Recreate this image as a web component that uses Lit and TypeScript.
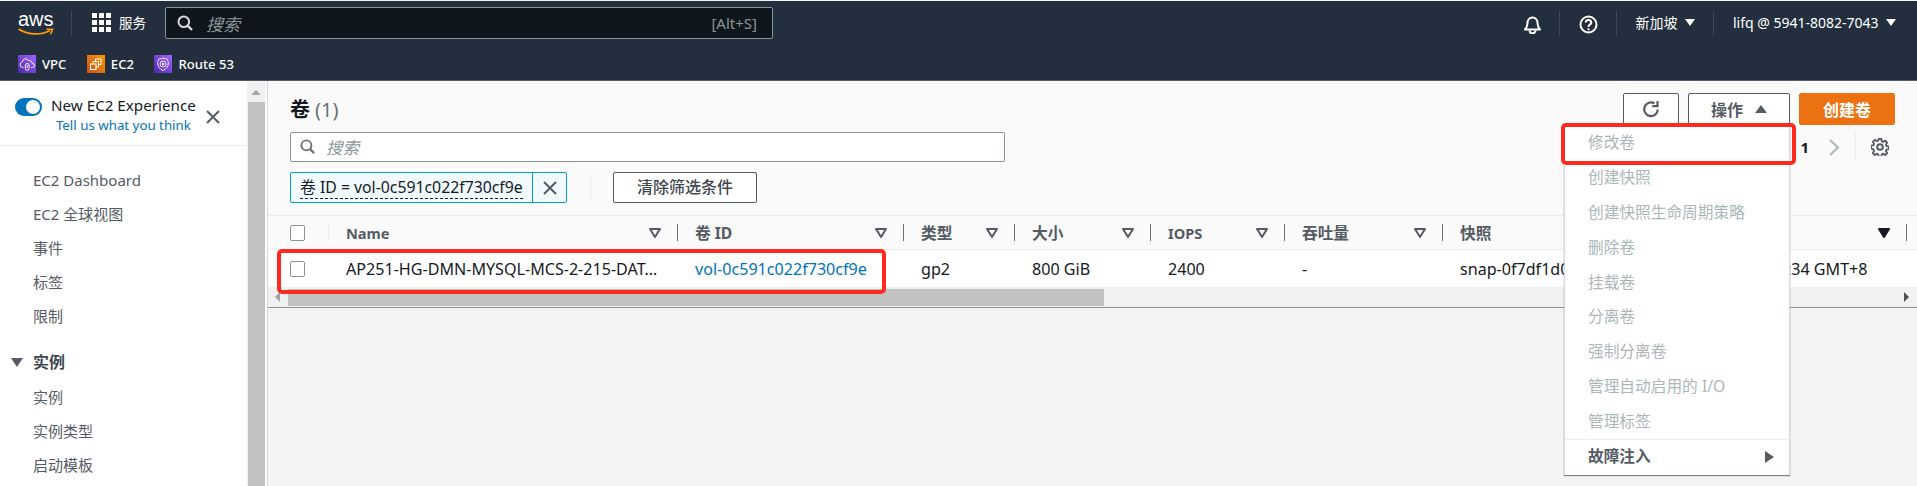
import { LitElement, html, css, svg } from "lit";
import { customElement } from "lit/decorators.js";

const SEARCH = svg`<circle cx="6.8" cy="6.8" r="5.3" fill="none" stroke="currentColor" stroke-width="2"/><path d="M10.6 10.6 15 15" stroke="currentColor" stroke-width="2.4" fill="none"/>`;
const X = svg`<path d="M2 2 14 14M14 2 2 14" stroke="currentColor" stroke-width="2" fill="none"/>`;

@customElement("app-root")
export class AppRoot extends LitElement {
  static styles = css`
    :host { display: block; position: relative; height: 100vh; overflow: hidden; background: #f2f3f3; font-family: "Noto Sans", "Noto Sans CJK SC", sans-serif; font-size: 16px; color: #16191f; }
    svg { display: block; flex: none; }
    .top { height: 80px; margin-top: 1px; background: #232f3e; color: #fff; border-bottom: 1px solid #545b64; box-sizing: border-box; }
    .nav { height: 48px; display: flex; align-items: flex-start; }
    .logo { width: 53px; margin-left: 18px; height: 38px; display: flex; flex-direction: column; align-items: flex-start; padding-top: 10px; box-sizing: border-box; }
    .logo b { font: 400 20px/16px "Liberation Sans", sans-serif; display: block; margin-bottom: 1px; }
    .nsep { width: 1px; height: 25px; background: #414750; margin-top: 10px; flex: none; }
    .svc { display: flex; align-items: center; gap: 8px; margin-left: 20px; height: 42px; font-size: 13.5px; width: 73px; }
    .grid { display: grid; grid-template-columns: repeat(3, 5px); gap: 2px; }
    .grid i { width: 5px; height: 5px; background: #fff; }
    .sbox { width: 608px; height: 32px; margin-top: 6px; box-sizing: border-box; background: #10161e; border: 1px solid #879596; border-radius: 2px; display: flex; align-items: center; padding: 0 15px 0 11px; color: #d5dbdb; gap: 12px; flex: none; }
    .sbox em { color: #879596; font-size: 17px; flex: 1; }
    .sbox span { color: #879596; font-size: 15px; }
    .right { margin-left: auto; display: flex; align-items: flex-start; font-size: 14px; }
    .ni { display: flex; align-items: center; justify-content: center; height: 42px; }
    .ni.ic { height: 46px; }
    .tri { width: 0; height: 0; border-left: 5px solid transparent; border-right: 5px solid transparent; border-top: 7px solid #fff; flex: none; }
    .fav { height: 30px; display: flex; align-items: center; padding-left: 18px; font-size: 13.1px; font-weight: 500; }
    .fi { width: 18px; height: 18px; margin-right: 6px; flex: none; }
    .fav span { margin-right: 20.500px; }
    .body { display: flex; height: 405px; }
    .side { width: 247px; flex: none; background: #fff; color: #545b64; position: relative; box-sizing: border-box; }
    .exp { height: 65px; border-bottom: 1px solid #eaeded; display: flex; padding: 0 0 0 15px; box-sizing: border-box; position: relative; }
    .tog { width: 27px; height: 18px; margin-top: 17px; background: #0073bb; border-radius: 9px; position: relative; flex: none; }
    .tog::after { content: ""; position: absolute; right: 2px; top: 2px; width: 14px; height: 14px; background: #fff; border-radius: 50%; }
    .et { margin: 14px 0 0 9px; font-size: 15.2px; line-height: 20px; color: #16191f; text-align: center; white-space: nowrap; }
    .et a { display: block; color: #0073bb; font-size: 13.300px; }
    .close { position: absolute; left: 205px; top: 28px; color: #545b64; }
    .nv { padding-top: 17px; }
    .nv div { height: 34px; line-height: 34px; padding-left: 33px; font-size: 15px; white-space: nowrap; }
    .nv .h { margin-top: 12px; margin-bottom: 1px; padding-left: 11px; display: flex; align-items: center; gap: 10px; font-weight: 700; font-size: 16px; color: #414750; }
    .nv .h .tri { border-left-width: 6px; border-right-width: 6px; border-top: 9px solid #545b64; }
    .vbar { width: 18px; flex: none; background: #f1f1f1; display: flex; flex-direction: column; align-items: center; padding-top: 9px; box-sizing: border-box; }
    .vbar .up { width: 0; height: 0; border-left: 5px solid transparent; border-right: 5px solid transparent; border-bottom: 5px solid #a3a3a3; }
    .vbar .th { width: 17px; flex: 1; margin-top: 7px; background: #c1c1c1; }
    .gap { width: 2px; background: #fafafa; flex: none; }
    .main { flex: 1; min-width: 0; border-left: 1px solid #d5dbdb; display: flex; flex-direction: column; }
    .panel { background: #fafafa; height: 134px; flex: none; padding: 0 22px; box-sizing: border-box; position: relative; }
    .tl { display: flex; align-items: flex-start; height: 51px; padding-top: 12px; box-sizing: border-box; }
    .title { font-size: 20px; font-weight: 700; line-height: 30px; margin-top: 2px; }
    .title span { font-weight: 400; color: #687078; margin-left: 5px; }
    .acts { margin-left: auto; display: flex; gap: 9px; }
    .btn { height: 32px; box-sizing: border-box; border: 1px solid #545b64; border-radius: 2px; background: #fff; color: #545b64; display: flex; align-items: center; justify-content: center; font-weight: 700; font-size: 16px; }
    .btn.refresh { width: 56px; }
    .btn.act { width: 102px; gap: 12px; }
    .btn.act .tu { width: 0; height: 0; border-left: 6px solid transparent; border-right: 6px solid transparent; border-bottom: 8px solid #545b64; }
    .btn.create { width: 96px; background: #ec7211; border-color: #ec7211; color: #fff; }
    .row1 { display: flex; align-items: flex-start; height: 30px; }
    .inp { width: 715px; height: 30px; box-sizing: border-box; background: #fff; border: 1px solid #879596; border-radius: 2px; display: flex; align-items: center; gap: 10px; padding-left: 9px; color: #687078; }
    .inp em { color: #879596; font-size: 16.5px; }
    .pg { margin-left: auto; display: flex; align-items: center; height: 30px; font-size: 15px; padding-right: 6px; }
    .pg .one { margin-right: 20px; font-weight: 700; }
    .pg .div { width: 1px; height: 30px; background: #eaeded; margin: 0 15px; }
    .row2 { display: flex; align-items: center; margin-top: 10px; height: 31px; }
    .chip { width: 277px; height: 31px; box-sizing: border-box; display: flex; background: #f1faff; border: 1px solid #00a1c9; border-radius: 2px; flex: none; }
    .chip .t { flex: 1; border-right: 1px solid #00a1c9; padding-left: 9px; font-size: 15.8px; line-height: 28px; white-space: nowrap; overflow: hidden; }
    .chip .t u { text-decoration: none; border-bottom: 1px dashed #16191f; display: inline-block; line-height: 22px; }
    .chip .c { width: 33px; display: flex; align-items: center; justify-content: center; color: #545b64; }
    .vs { width: 1px; height: 30px; background: #eaeded; margin: 0 22px 0 23px; flex: none; }
    .clr { width: 144px; height: 31px; box-sizing: border-box; border: 1px solid #545b64; border-radius: 2px; background: #fff; text-align: center; line-height: 28px; font-size: 16px; font-weight: 500; color: #414750; }
    .tbl { flex: none; overflow: hidden; }
    .tr { display: grid; grid-template-columns: 60px 349px 226px 111px 136px 134px 158px 196px 268px 100px; }
    .tr.head { height: 35px; background: #fafafa; border-top: 1px solid #eaeded; border-bottom: 1px solid #eaeded; box-sizing: border-box; font-weight: 700; color: #545b64; font-size: 15.7px; }
    .tr.row { height: 37px; background: #fff; }
    .cell { display: flex; align-items: center; padding-left: 18px; padding-right: 16px; white-space: nowrap; overflow: hidden; min-width: 0; box-sizing: border-box; }
    .head .cell { position: relative; }
    .head .cell::before { content: ""; position: absolute; left: 0; top: 8px; bottom: 8px; width: 1px; background: #687078; }
    .head .cell.first::before { background: #eaeded; }
    .head .cell.ck::before { display: none; }
    .ck { padding-left: 22px; padding-right: 0; }
    .cb { width: 15px; height: 16px; box-sizing: border-box; border: 1px solid #879596; border-radius: 2px; background: #fff; flex: none; }
    .cell label { flex: 1; overflow: hidden; text-overflow: ellipsis; }
    .cell label.lat { font-size: 14.600px; }
    .row .cell { padding-left: 18px; padding-right: 18px; font-size: 16.100px; }
    .row .cell.ck { padding-left: 22px; padding-right: 0; }
    .row .cell span { overflow: hidden; text-overflow: ellipsis; }
    .row a { color: #0073bb; }
    .caret { flex: none; }
    .hbar { height: 21px; background: #f1f1f1; border-bottom: 1px solid #879596; box-sizing: border-box; display: flex; align-items: center; position: relative; }
    .hbar .th { position: absolute; left: 20px; width: 816px; top: 2px; height: 17px; background: #c1c1c1; }
    .hbar .l { position: absolute; left: 7px; top: 5px; width: 0; height: 0; border-top: 5px solid transparent; border-bottom: 5px solid transparent; border-right: 5px solid #a3a3a3; }
    .hbar .r { position: absolute; left: 1636px; top: 5px; width: 0; height: 0; border-top: 5px solid transparent; border-bottom: 5px solid transparent; border-left: 5px solid #505050; }
    .fill { flex: 1; background: #f2f3f3; }
    .menu { position: absolute; left: 1564px; top: 125px; width: 226px; height: 350px; background: #fff; box-sizing: border-box; border: 1px solid #d5dbdb; border-top: 0; border-bottom: 0; box-shadow: 0 1px 1px 0 rgba(0,28,36,.5); color: #aab7b8; font-size: 15.7px; }
    .menu div { height: 34.9px; line-height: 34.9px; padding-left: 23px; white-space: nowrap; }
    .menu .sub { border-top: 1px solid #eaeded; color: #545b64; font-weight: 700; display: flex; align-items: center; justify-content: space-between; padding-right: 15px; height: 34px; box-sizing: border-box; }
    .menu .sub i { width: 0; height: 0; border-top: 6px solid transparent; border-bottom: 6px solid transparent; border-left: 9px solid #545b64; }
    .red { position: absolute; box-sizing: border-box; border: 4px solid #ff2a1e; border-radius: 5px; pointer-events: none; }
    .red.a { left: 277px; top: 249px; width: 609px; height: 45px; }
    .red.b { left: 1561px; top: 123px; width: 235px; height: 42px; }
  `;

  caret(dark = false) {
    return svg`<svg class="caret" width="12" height="10" viewBox="0 0 12 10"><path d="M1 1h10L6 9z" fill="${dark ? "#16191f" : "#fafafa"}" stroke="${dark ? "#16191f" : "#545b64"}" stroke-width="2" stroke-linejoin="round"/></svg>`;
  }

  render() {
    const heads = [["Name", "first lat"], ["卷 ID", ""], ["类型", ""], ["大小", ""], ["IOPS", "lat"], ["吞吐量", ""], ["快照", ""]];
    return html`
      <div class="top">
        <div class="nav">
          <div class="logo"><b>aws</b>
            <svg width="36" height="8" viewBox="0 0 36 8"><path d="M0.500 1C9 6.500 22 8 32 2.500" fill="none" stroke="#f90" stroke-width="1.800"/><path d="M28.500 1.200h6l-2 5" fill="none" stroke="#f90" stroke-width="1.600"/></svg>
          </div>
          <div class="nsep"></div>
          <div class="svc"><div class="grid">${Array.from({ length: 9 }, () => html`<i></i>`)}</div><span>服务</span></div>
          <div class="sbox">
            <svg width="17" height="17" viewBox="0 0 17 17">${SEARCH}</svg>
            <em>搜索</em><span>[Alt+S]</span>
          </div>
          <div class="right">
            <div class="ni ic" style="width:53px">
              <svg width="19" height="19" viewBox="0 0 19 19" fill="none" stroke="#fff" stroke-width="2"><path d="M2 14.500h15c-2-2-2.500-3-2.500-6.500 0-3-2-5.500-5-5.500s-5 2.500-5 5.500c0 3.500-.5 4.500-2.500 6.500z" stroke-linejoin="round"/><path d="M6.500 15.500a3 2.800 0 0 0 6 0"/></svg>
            </div>
            <div class="nsep"></div>
            <div class="ni ic" style="width:56px">
              <svg width="19" height="19" viewBox="0 0 19 19" fill="none" stroke="#fff" stroke-width="2"><circle cx="9.500" cy="9.500" r="8"/><path d="M6.800 7.500a2.700 2.500 0 1 1 4 2.200c-1 .6-1.300 1-1.300 2.300"/><path d="M9.500 13.300v1.900"/></svg>
            </div>
            <div class="nsep"></div>
            <div class="ni" style="width:96px;gap:7px"><span>新加坡</span><i class="tri"></i></div>
            <div class="nsep"></div>
            <div class="ni" style="width:203px;gap:7px;justify-content:flex-start;padding-left:19px;box-sizing:border-box"><span>lifq @ 5941-8082-7043</span><i class="tri"></i></div>
          </div>
        </div>
        <div class="fav">
          <svg class="fi" viewBox="0 0 18 18"><defs><linearGradient id="gp" x1="0" y1="1" x2="1" y2="0"><stop offset="0" stop-color="#4d27a8"/><stop offset="1" stop-color="#a166ff"/></linearGradient><linearGradient id="go" x1="0" y1="1" x2="1" y2="0"><stop offset="0" stop-color="#c8511b"/><stop offset="1" stop-color="#f90"/></linearGradient></defs><rect width="18" height="18" fill="url(#gp)"/><path d="M5.500 12.500H4.800a2.800 2.800 0 0 1-.6-5.500 3.500 3.500 0 0 1 6.500-1.500 3 3 0 0 1 3.500 3 2 2 0 0 1 .3 4H13" fill="none" stroke="#fff" stroke-width=".9"/><rect x="7.300" y="8.500" width="3.800" height="6.800" rx="1.900" fill="none" stroke="#fff" stroke-width=".9"/><path d="M9.200 10v3" stroke="#fff" stroke-width=".9"/></svg><span>VPC</span>
          <svg class="fi" viewBox="0 0 18 18"><rect width="18" height="18" fill="url(#go)"/><rect x="3.500" y="9" width="5.500" height="5.500" fill="none" stroke="#fff"/><path d="M6 9V6.500h5.500V12H9" fill="none" stroke="#fff"/><path d="M8.500 6.500V4h5.500v5.500h-2.500" fill="none" stroke="#fff"/></svg><span>EC2</span>
          <svg class="fi" viewBox="0 0 18 18"><rect width="18" height="18" fill="url(#gp)"/><path d="M9 3c1.300 1 3 .6 4.300 1.200.2 1.300 1.400 3 1 4.800s-1.800 5.300-5.300 6.500C5.500 14.300 4 11 3.700 9s.8-3.500 1-4.800C6 3.600 7.700 4 9 3z" fill="none" stroke="#fff" stroke-width=".9"/><circle cx="9" cy="9" r="3" fill="none" stroke="#fff" stroke-width=".9"/><circle cx="9" cy="9" r="1.200" fill="#fff"/></svg><span>Route 53</span>
        </div>
      </div>
      <div class="body">
        <div class="side">
          <div class="exp">
            <div class="tog"></div>
            <div class="et">New EC2 Experience<a>Tell us what you think</a></div>
            <svg class="close" width="16" height="16" viewBox="0 0 16 16">${X}</svg>
          </div>
          <div class="nv">
            <div>EC2 Dashboard</div><div>EC2 全球视图</div><div>事件</div><div>标签</div><div>限制</div>
            <div class="h"><i class="tri"></i>实例</div>
            <div>实例</div><div>实例类型</div><div>启动模板</div>
          </div>
        </div>
        <div class="vbar"><i class="up"></i><div class="th"></div></div>
        <div class="gap"></div>
        <div class="main">
          <div class="panel">
            <div class="tl">
              <div class="title">卷<span>(1)</span></div>
              <div class="acts">
                <div class="btn refresh"><svg width="18" height="18" viewBox="0 0 18 18" fill="none" stroke="#545b64" stroke-width="2.200"><path d="M15.800 9.500A6.800 6.800 0 1 1 12.500 3.400"/><path d="M15.500 1v5.200h-5.200" /></svg></div>
                <div class="btn act"><span>操作</span><i class="tu"></i></div>
                <div class="btn create">创建卷</div>
              </div>
            </div>
            <div class="row1">
              <div class="inp"><svg width="16" height="16" viewBox="0 0 17 17">${SEARCH}</svg><em>搜索</em></div>
              <div class="pg"><span class="one">1</span>
                <svg width="11" height="17" viewBox="0 0 11 17" fill="none" stroke="#aab7b8" stroke-width="2"><path d="M1 1l8 7.500L1 16"/></svg>
                <i class="div"></i>
                <svg width="18" height="18" viewBox="0 0 18 18" fill="none" stroke="#545b64" stroke-width="2"><circle cx="9" cy="9" r="2.800"/><path d="M7.600 1h2.800l.4 2.300 1.500.6 1.900-1.300 2 2-1.300 1.900.6 1.500 2.300.4v2.800l-2.300.4-.6 1.500 1.300 1.900-2 2-1.900-1.300-1.500.6-.4 2.300H7.600l-.4-2.300-1.500-.6-1.900 1.300-2-2 1.300-1.900-.6-1.500L.2 10.400V7.600l2.300-.4.6-1.500-1.300-1.900 2-2 1.900 1.300 1.500-.6z" stroke-linejoin="round" stroke-width="1.800"/></svg>
              </div>
            </div>
            <div class="row2">
              <div class="chip"><div class="t"><u>卷 ID = vol-0c591c022f730cf9e</u></div><div class="c"><svg width="16" height="16" viewBox="0 0 16 16">${X}</svg></div></div>
              <i class="vs"></i>
              <div class="clr">清除筛选条件</div>
            </div>
          </div>
          <div class="tbl">
            <div class="tr head">
              <div class="cell ck"><i class="cb"></i></div>
              ${heads.map(([t, f]) => html`<div class="cell ${f.includes("first") ? "first" : ""}"><label class="${f.includes("lat") ? "lat" : ""}">${t}</label>${this.caret()}</div>`)}
              <div class="cell"><label>创建时间</label>${this.caret(true)}</div>
              <div class="cell"></div>
            </div>
            <div class="tr row">
              <div class="cell ck"><i class="cb"></i></div>
              <div class="cell"><span>AP251-HG-DMN-MYSQL-MCS-2-215-DATA-1</span></div>
              <div class="cell"><a>vol-0c591c022f730cf9e</a></div>
              <div class="cell">gp2</div>
              <div class="cell">800 GiB</div>
              <div class="cell">2400</div>
              <div class="cell">-</div>
              <div class="cell"><span>snap-0f7df1d0a3c24e816</span></div>
              <div class="cell">2022/08/19 10:20:34 GMT+8</div>
              <div class="cell"></div>
            </div>
            <div class="hbar"><i class="l"></i><div class="th"></div><i class="r"></i></div>
          </div>
          <div class="fill"></div>
        </div>
      </div>
      <div class="menu">
        ${["修改卷", "创建快照", "创建快照生命周期策略", "删除卷", "挂载卷", "分离卷", "强制分离卷", "管理自动启用的 I/O", "管理标签"].map((t) => html`<div>${t}</div>`)}
        <div class="sub"><span>故障注入</span><i></i></div>
      </div>
      <div class="red a"></div>
      <div class="red b"></div>
    `;
  }
}
